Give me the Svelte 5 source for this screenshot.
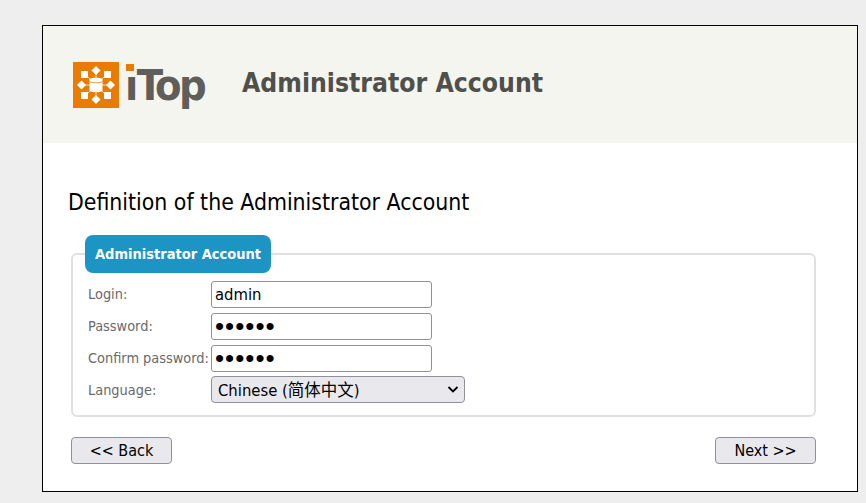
<script>
  let login = "admin"
  let password = "secret"
  let confirm = "secret"
  let language = "zh"
</script>

<div class="wizard">
  <header>
    <div class="logo">
      <svg width="46" height="46" viewBox="0 0 46 46" aria-hidden="true">
        <rect width="46" height="46" fill="#e87b00" />
        <path d="M14 14l4 4M32 14l-4 4M14 32l4-4M32 32l-4-4M23 12v4M23 30v4M12 23h5M29 23h5" stroke="#fbd9ad" stroke-width="1" />
        <g fill="#fff">
          <path d="M23 4l4.500 4.500-4.500 4.500-4.500-4.500z" />
          <path d="M23 33l4.500 4.500-4.500 4.500-4.500-4.500z" />
          <path d="M8.500 18.500l4.500 4.500-4.500 4.500-4.500-4.500z" />
          <path d="M37.500 18.500l4.500 4.500-4.500 4.500-4.500-4.500z" />
          <rect x="8" y="9" width="7" height="7" />
          <rect x="31" y="9" width="7" height="7" />
          <rect x="8" y="30" width="7" height="7" />
          <rect x="31" y="30" width="7" height="7" />
          <path d="M16.500 17.500c0-2.400 13-2.400 13 0v11c0 2.400-13 2.400-13 0z" />
        </g>
        <path d="M16.500 19.500c2 1.800 11 1.800 13 0" fill="none" stroke="#e87b00" stroke-width=".8" />
      </svg>
      <span class="logo-name"><span class="stem">ı<span class="dot"></span></span>Top</span>
    </div>
    <h1>Administrator Account</h1>
  </header>

  <main>
    <h2>Definition of the Administrator Account</h2>

    <fieldset>
      <legend>Administrator Account</legend>
      <div class="row">
        <label for="login">Login:</label>
        <input id="login" type="text" bind:value={login} />
      </div>
      <div class="row">
        <label for="password">Password:</label>
        <input id="password" class="secret" type="password" bind:value={password} />
      </div>
      <div class="row">
        <label for="confirm">Confirm password:</label>
        <input id="confirm" class="secret" type="password" bind:value={confirm} />
      </div>
      <div class="row">
        <label for="language">Language:</label>
        <div class="select">
          <select id="language" bind:value={language}>
            <option value="zh">Chinese (简体中文)</option>
            <option value="en">English</option>
          </select>
          <svg width="12" height="7" viewBox="0 0 12 7" aria-hidden="true">
            <path d="M1.500 1l4.500 4.500 4.500-4.500" fill="none" stroke="#000" stroke-width="1.800" />
          </svg>
        </div>
      </div>
    </fieldset>

    <div class="buttons">
      <button type="button">&lt;&lt; Back</button>
      <button type="button">Next &gt;&gt;</button>
    </div>
  </main>
</div>

<style>
  :global(body) {
    background: #eee;
    font-family: "DejaVu Sans", "Noto Sans CJK SC", sans-serif;
  }
  .wizard {
    box-sizing: border-box;
    width: 816px;
    height: 467px;
    margin: 25px 0 0 42px;
    border: 1px solid #000;
    background: #fff;
  }
  header {
    display: flex;
    align-items: center;
    gap: 37px;
    height: 117px;
    padding-left: 30px;
    background: #f4f5ef;
  }
  .logo {
    display: flex;
    align-items: center;
    gap: 6px;
  }
  .logo-name {
    width: 80px;
    font-size: 43px;
    font-weight: bold;
    font-stretch: condensed;
    line-height: 46px;
    letter-spacing: -2.500px;
    color: #5f5e5a;
  }
  .stem {
    position: relative;
    margin-right: 1px;
  }
  .dot {
    position: absolute;
    top: 4px;
    left: 1px;
    width: 8px;
    height: 7px;
    background: #e87b00;
  }
  h1 {
    margin: 0 0 3px;
    font-size: 26.300px;
    font-weight: bold;
    font-stretch: condensed;
    color: #4f4f4b;
  }
  main {
    padding: 45px 41px 0 25px;
  }
  h2 {
    margin: 0 0 18px;
    font-size: 22.800px;
    line-height: 29px;
    font-weight: normal;
    font-stretch: condensed;
    color: #000;
  }
  fieldset {
    box-sizing: border-box;
    height: 182px;
    margin: 0 0 20px 3px;
    padding: 0 15px;
    border: 2px solid #e0e0e0;
    border-radius: 6px;
  }
  legend {
    box-sizing: border-box;
    height: 38px;
    margin-left: -3px;
    padding: 0 10px;
    line-height: 39px;
    font-size: 14.500px;
    font-weight: bold;
    font-stretch: condensed;
    color: #fff;
    background: #1c95c5;
    border-radius: 8px;
  }
  .row {
    display: flex;
    align-items: center;
    height: 32px;
  }
  .row:first-of-type {
    margin-top: 5px;
  }
  label {
    width: 123px;
    flex: none;
    font-size: 14.400px;
    font-stretch: condensed;
    color: #696969;
    white-space: nowrap;
  }
  input {
    box-sizing: border-box;
    width: 221px;
    height: 27px;
    padding: 1px 3px;
    border: 1px solid #8f8f9d;
    border-radius: 3px;
    font: 16.500px "DejaVu Sans", sans-serif;
    font-stretch: condensed;
    color: #000;
    background: #fff;
  }
  input.secret {
    font: 26px "Liberation Sans", sans-serif;
    letter-spacing: 1px;
  }
  .select {
    position: relative;
    display: flex;
    width: 254px;
    margin-top: -1px;
  }
  .select svg {
    position: absolute;
    top: 10px;
    right: 6px;
    pointer-events: none;
  }
  select {
    appearance: none;
    box-sizing: border-box;
    width: 100%;
    height: 27px;
    padding: 2px 6px 0;
    border: 1px solid #8f8f9d;
    border-radius: 4px;
    font: 16.500px "DejaVu Sans", "Noto Sans CJK SC", sans-serif;
    font-stretch: condensed;
    color: #000;
    background: #e9e9ed;
  }
  .buttons {
    display: flex;
    justify-content: space-between;
    margin-left: 3px;
  }
  button {
    box-sizing: border-box;
    width: 101px;
    height: 27px;
    padding: 0;
    border: 1px solid #8f8f9d;
    border-radius: 4px;
    font: 16px "DejaVu Sans", sans-serif;
    font-stretch: condensed;
    color: #000;
    background: #e9e9ed;
  }
</style>
